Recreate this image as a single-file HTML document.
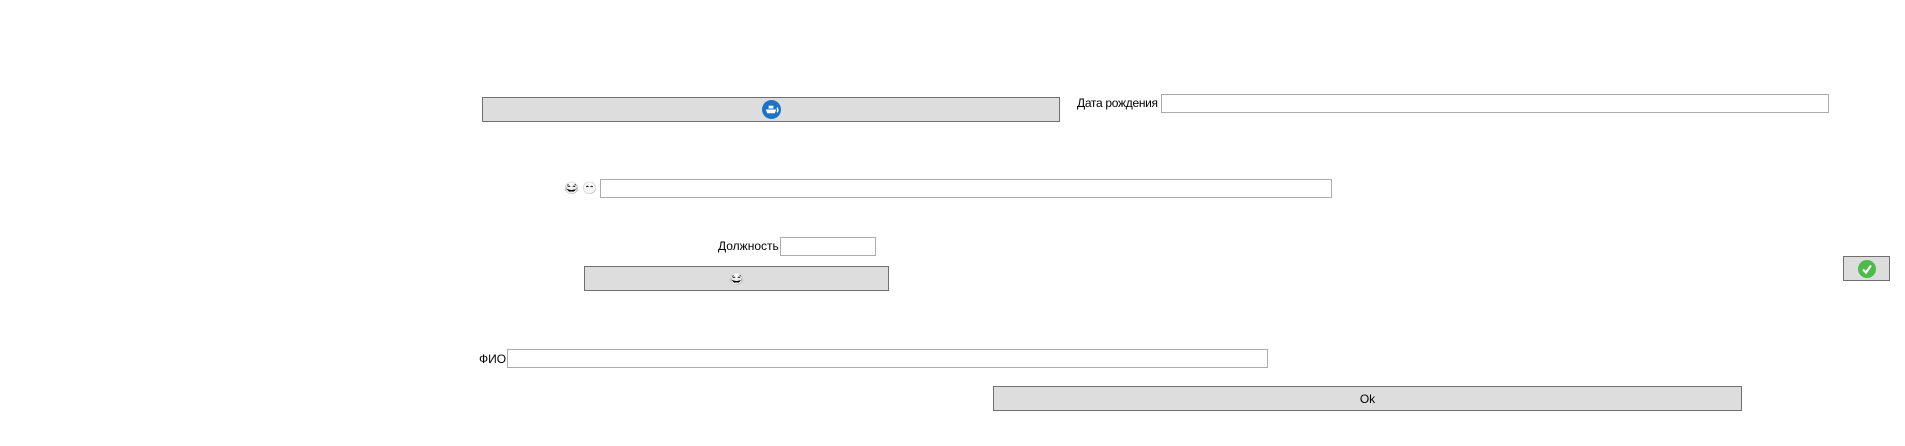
<!DOCTYPE html>
<html><head><meta charset="utf-8"><style>
body{margin:0;width:1905px;height:446px;background:#fff;position:relative;overflow:hidden;font-family:"Liberation Sans",sans-serif;font-size:12px;color:#000}
.a{position:absolute;box-sizing:border-box}
.btn{background:#dddddd;border:1px solid #707070}
.inp{background:#fff;border:1px solid #ababab}
.lbl{position:absolute;white-space:nowrap;line-height:14px}
.c{display:flex;align-items:center;justify-content:center}
.g{filter:grayscale(1) contrast(1.6)}
</style></head><body>
<div class="a btn c" style="left:482px;top:97px;width:578px;height:25px">
<svg width="19" height="19" viewBox="0 0 20 20"><circle cx="10" cy="10" r="10" fill="#1a73c8"/><path d="M4 10h11l-1.5 4h-8z" fill="#fff"/><rect x="7" y="6" width="5" height="3" fill="#fff"/><path d="M16 8a6 6 0 0 1 0 5" stroke="#fff" stroke-width="1.5" fill="none"/></svg></div>
<div class="lbl" style="left:1077px;top:96px;letter-spacing:-0.3px">Дата рождения</div>
<div class="a inp" style="left:1161px;top:94px;width:668px;height:19px"></div>
<div class="lbl g" style="left:564px;top:181px;font-size:12px">😂 😁</div>
<div class="a inp" style="left:600px;top:179px;width:732px;height:19px"></div>
<div class="lbl" style="left:718px;top:239px">Должность</div>
<div class="a inp" style="left:780px;top:237px;width:96px;height:19px"></div>
<div class="a btn c" style="left:584px;top:266px;width:305px;height:25px;font-size:12px"><span class="g">😂</span></div>
<div class="a btn c" style="left:1843px;top:256px;width:47px;height:25px">
<svg width="18" height="18" viewBox="0 0 18 18"><circle cx="9" cy="9" r="9" fill="#4cbb4a"/><path d="M5 9.5l3 3 5-7" stroke="#fff" stroke-width="2.2" fill="none"/></svg></div>
<div class="lbl" style="left:479px;top:352px">ФИО</div>
<div class="a inp" style="left:507px;top:349px;width:761px;height:19px"></div>
<div class="a btn c" style="left:993px;top:386px;width:749px;height:25px;font-size:12px">Ok</div>
</body></html>
